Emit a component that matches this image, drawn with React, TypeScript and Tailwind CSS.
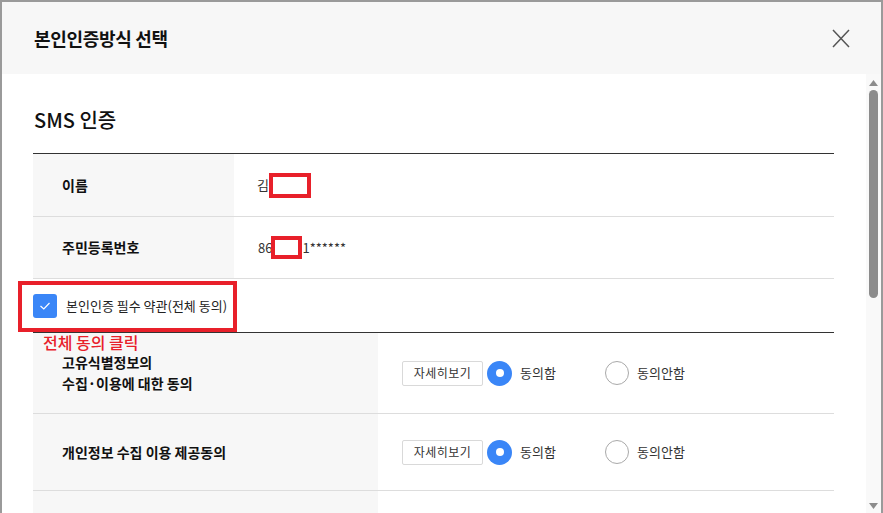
import React from "react";

const font = { fontFamily: '"Noto Sans CJK KR", "Noto Sans", sans-serif' };

function Radio({ checked, label }: { checked: boolean; label: string }) {
  return (
    <div className="flex items-center">
      {checked ? (
        <div className="w-[25px] h-[25px] rounded-full bg-[#3a86f7] flex items-center justify-center">
          <div className="w-[8px] h-[8px] rounded-full bg-white" />
        </div>
      ) : (
        <div className="w-[24px] h-[24px] rounded-full border border-[#a9a9a9] bg-white" />
      )}
      <span className="ml-[8px] text-[13px] text-[#333]">{label}</span>
    </div>
  );
}

function AgreeCell() {
  return (
    <div className="flex items-center pl-[24px]">
      <button className="w-[81px] h-[25px] border border-[#d9d9d9] rounded-[2px] bg-white text-[12px] text-[#333] tracking-[0.5px] flex items-center justify-center">
        자세히보기
      </button>
      <div className="ml-[4px] w-[118px]">
        <Radio checked label="동의함" />
      </div>
      <Radio checked={false} label="동의안함" />
    </div>
  );
}

export default function App() {
  return (
    <div style={font} className="w-[883px] h-[513px] overflow-hidden bg-white">
      <div className="relative w-full h-full border-2 border-b-0 border-[#9a9a9a] flex flex-col">
        {/* header */}
        <div className="h-[72px] shrink-0 bg-[#f7f7f7] flex items-center justify-between pl-[32px] pr-[31px]">
          <h1 className="text-[18px] font-bold text-[#111] tracking-[-0.3px]">본인인증방식 선택</h1>
          <svg width="18" height="19" viewBox="0 0 18 19">
            <path d="M1 1 L17 18 M17 1 L1 18" stroke="#555" strokeWidth="1.5" fill="none" />
          </svg>
        </div>
        {/* body */}
        <div className="flex flex-1 min-h-0">
          <div className="relative flex-1 pl-[31px] pr-[32px] pt-[32px]">
            <h2 className="text-[20px] font-medium text-[#111] leading-[28px] pl-[1px]">SMS 인증</h2>
            <div className="mt-[19px] border-t border-[#333]">
              <div className="flex h-[63px] border-b border-[#ddd]">
                <div className="w-[201px] bg-[#f7f7f7] flex items-center pl-[29px] text-[14px] font-bold text-[#111]">이름</div>
                <div className="flex items-center pl-[23px] text-[13px] text-[#333]">
                  <span>김</span>
                  <span className="inline-block w-[42px] h-[25px] border-[4px] border-[#e8202a] bg-white" />
                </div>
              </div>
              <div className="flex h-[62px] border-b border-[#ddd]">
                <div className="w-[201px] bg-[#f7f7f7] flex items-center pl-[29px] text-[14px] font-bold text-[#111]">주민등록번호</div>
                <div className="flex items-center pl-[24px] text-[13px] text-[#333]">
                  <span>86</span>
                  <span className="inline-block -ml-[1px] w-[31px] h-[23px] border-[4px] border-[#e8202a] bg-white" />
                  <span>1******</span>
                </div>
              </div>
            </div>
            <div className="h-[53px] flex items-center">
              <div className="w-[24px] h-[24px] rounded-[3px] bg-[#3a86f7] flex items-center justify-center">
                <svg width="12" height="10" viewBox="0 0 12 10">
                  <path d="M1.5 5 L4.8 8 L10.5 2" stroke="white" strokeWidth="1.2" fill="none" />
                </svg>
              </div>
              <span className="ml-[9px] text-[13px] text-[#222]">본인인증 필수 약관(전체 동의)</span>
            </div>
            <div className="border-t border-[#333]">
              <div className="flex h-[81px] border-b border-[#ddd]">
                <div className="w-[345px] bg-[#f7f7f7] flex items-center pl-[29px] text-[14px] font-bold text-[#111] leading-[21px]">
                  고유식별정보의
                  <br />
                  수집·이용에 대한 동의
                </div>
                <AgreeCell />
              </div>
              <div className="flex h-[77px] border-b border-[#ddd]">
                <div className="w-[345px] bg-[#f7f7f7] flex items-center pl-[29px] text-[14px] font-bold text-[#111]">
                  개인정보 수집 이용 제공동의
                </div>
                <AgreeCell />
              </div>
              <div className="flex h-[60px]">
                <div className="w-[345px] bg-[#f7f7f7]" />
              </div>
            </div>
            {/* annotations */}
            <div className="absolute left-[16px] top-[207px] w-[219px] h-[51px] border-[4px] border-[#e8202a]" />
            <div className="absolute left-[41px] top-[257px] text-[16px] font-medium text-[#e8202a] leading-[22px]">전체 동의 클릭</div>
          </div>
          {/* scrollbar */}
          <div className="w-[15px] shrink-0 bg-[#f9f9f9] flex flex-col items-center pt-[6px] pb-[4px]">
            <svg width="9" height="6" viewBox="0 0 9 6"><path d="M4.5 0 L9 6 L0 6 Z" fill="#8c8c8c" /></svg>
            <div className="mt-[4px] w-[9px] h-[208px] rounded-full bg-[#8c8c8c]" />
            <div className="flex-1" />
            <svg width="9" height="6" viewBox="0 0 9 6"><path d="M0 0 L9 0 L4.5 6 Z" fill="#8c8c8c" /></svg>
          </div>
        </div>
      </div>
    </div>
  );
}
